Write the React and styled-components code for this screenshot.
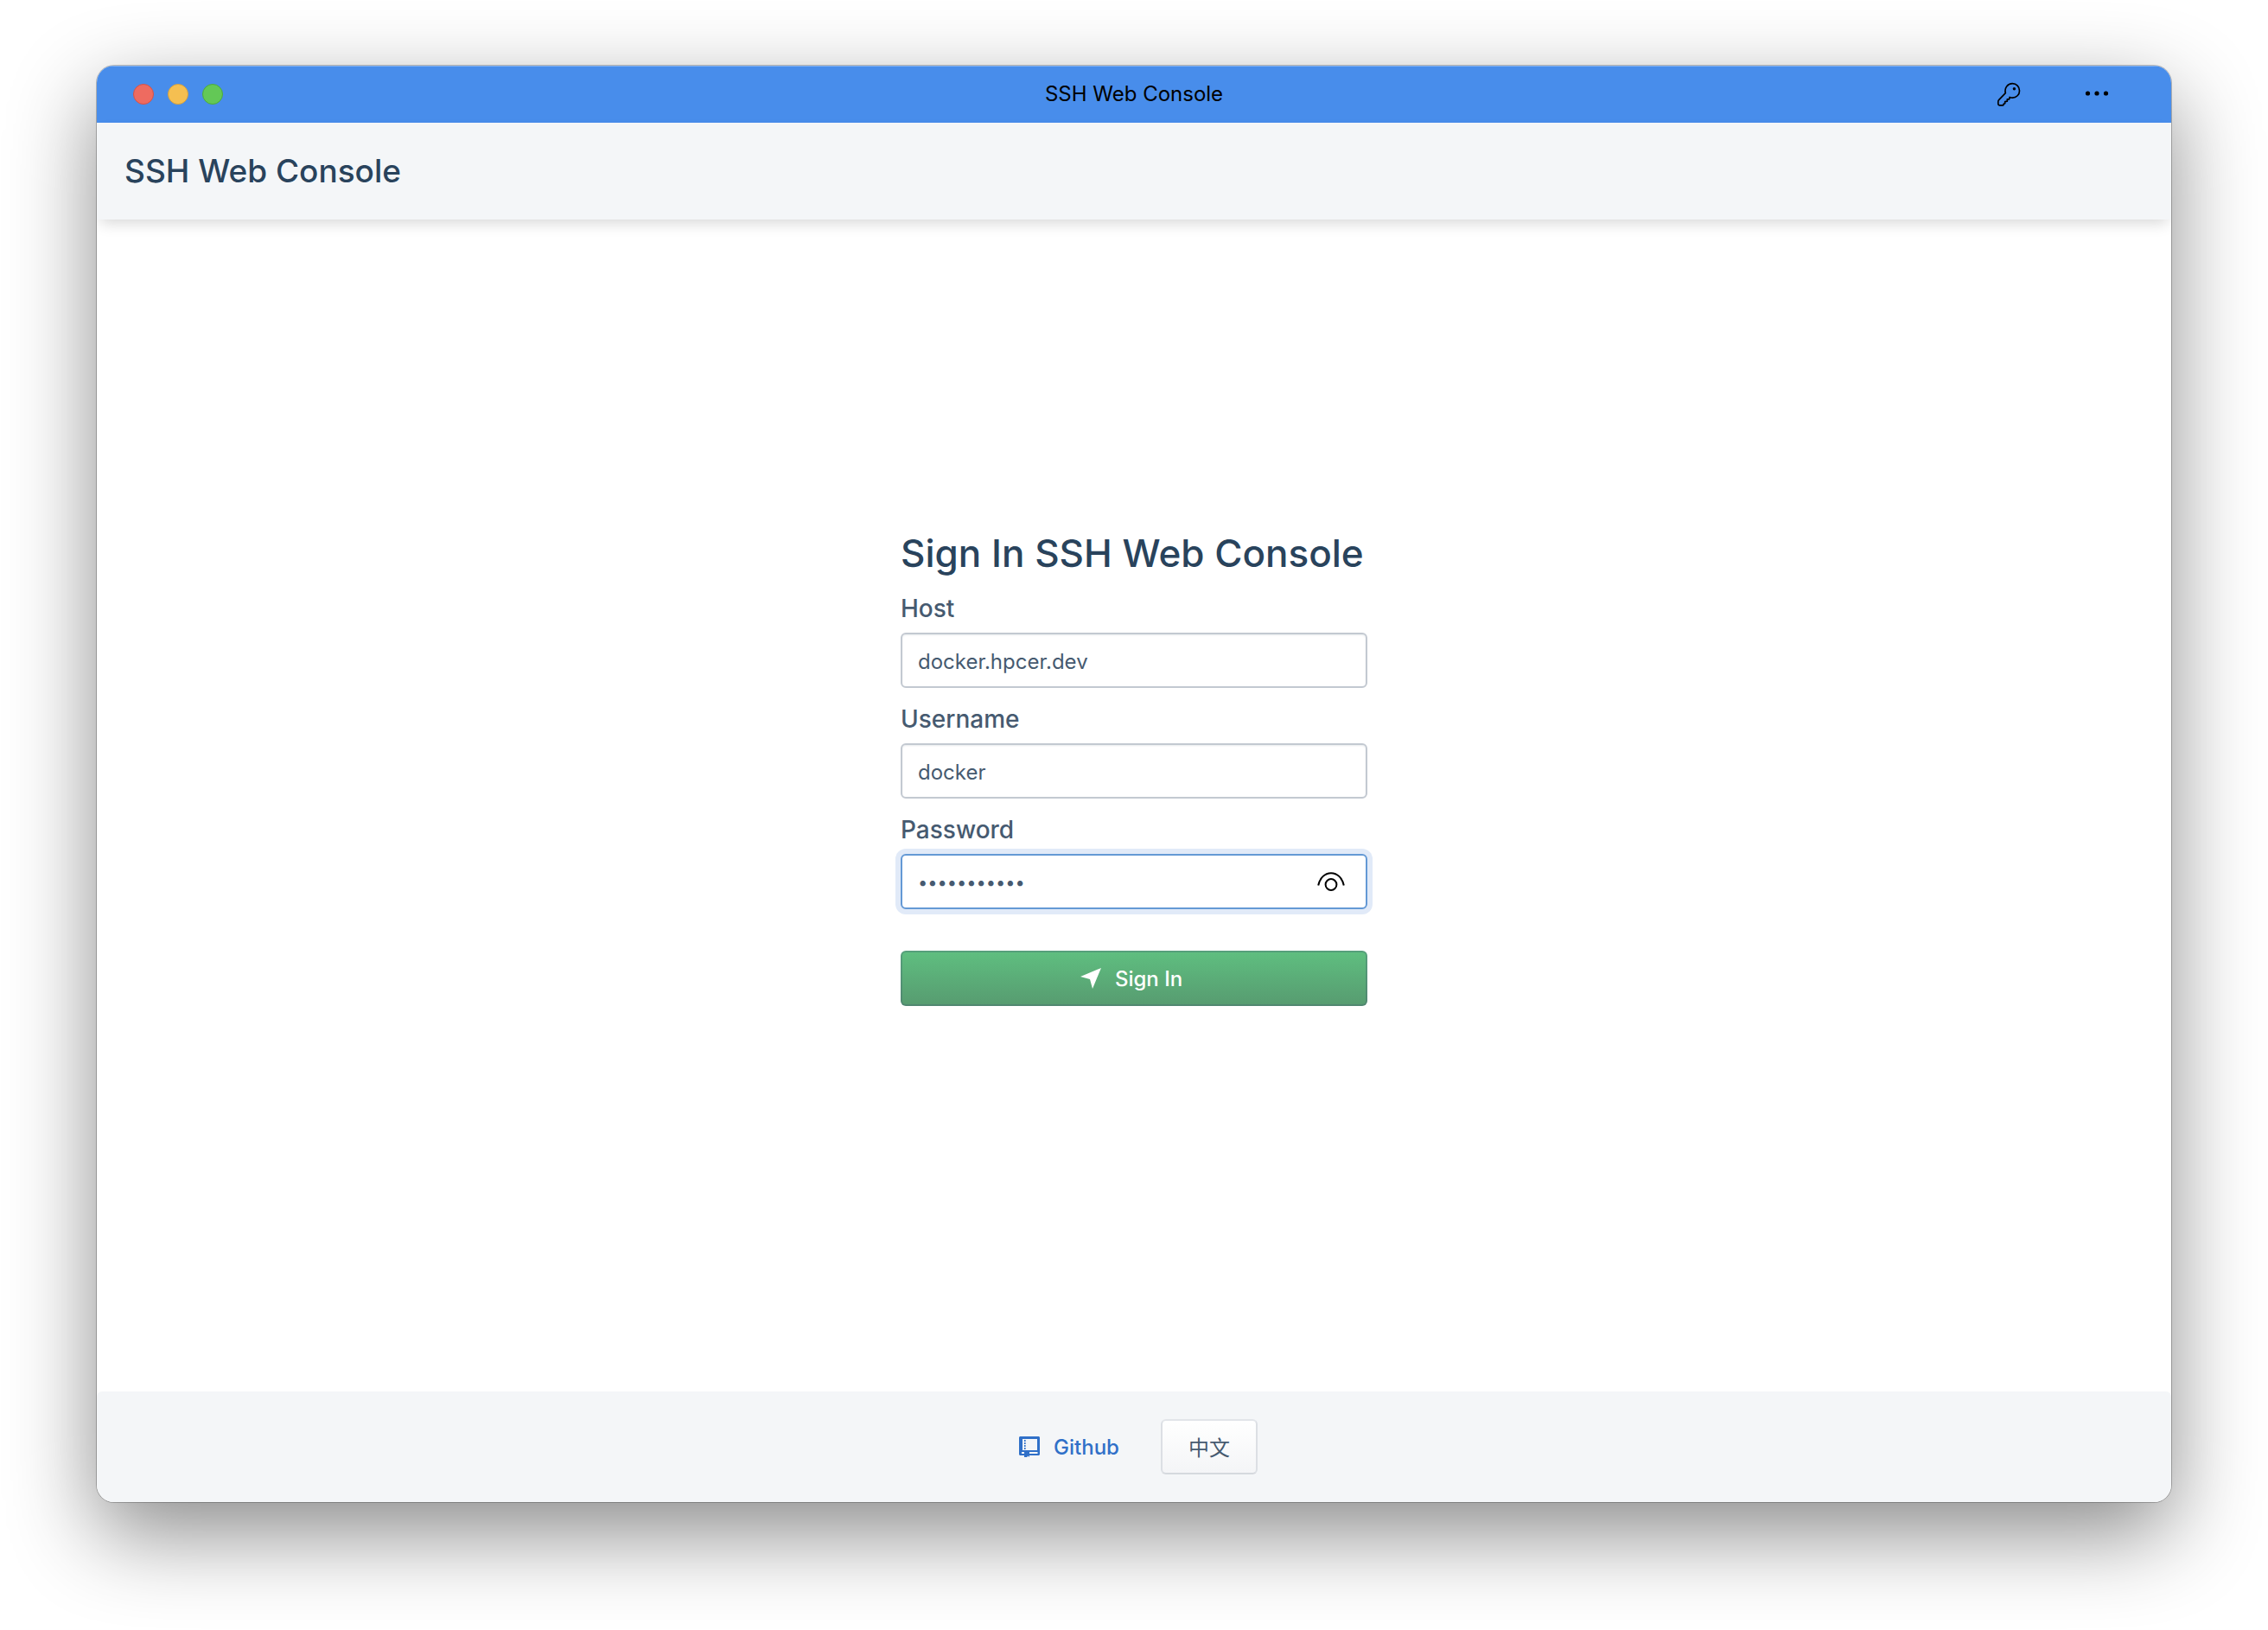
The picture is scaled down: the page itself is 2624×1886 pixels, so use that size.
import React, { useState } from 'react';
import styled, { createGlobalStyle } from 'styled-components';

const GlobalStyle = createGlobalStyle`
  *, *::before, *::after { box-sizing: border-box; }
  body {
    margin: 0;
    background: #ffffff;
    font-family: Inter, "Liberation Sans", "Noto Sans CJK SC", sans-serif;
  }
`;

const Desktop = styled.div`
  display: flex;
  min-height: 100vh;
  padding: 76px 112px 148px;
`;

const Window = styled.div`
  display: flex;
  flex-direction: column;
  flex: 1;
  overflow: hidden;
  border-radius: 20px;
  background: #ffffff;
  box-shadow:
    0 0 0 1px rgba(0, 0, 0, 0.24),
    0 36px 100px rgba(0, 0, 0, 0.46);
`;

const TitleBar = styled.div`
  display: grid;
  grid-template-columns: 1fr auto 1fr;
  align-items: center;
  height: 66px;
  padding: 0 42px;
  background: #488deb;
  box-shadow: inset 0 1px 0 #86b4f2;
`;

const Lights = styled.div`
  display: flex;
  gap: 16px;
`;

const Light = styled.button`
  width: 24px;
  height: 24px;
  padding: 0;
  border: 1px solid ${(p) => p.$edge};
  border-radius: 50%;
  background: ${(p) => p.$fill};
`;

const WindowTitle = styled.div`
  color: #000000;
  font-size: 24px;
  line-height: 32px;
`;

const Tools = styled.div`
  display: flex;
  justify-content: flex-end;
  gap: 74px;
  padding-right: 30px;
`;

const IconButton = styled.button`
  display: flex;
  align-items: center;
  justify-content: center;
  padding: 0;
  border: 0;
  background: none;
  color: #000000;
`;

const Header = styled.header`
  display: flex;
  align-items: center;
  height: 112px;
  padding: 0 32px;
  background: #f4f6f8;
  box-shadow: 0 8px 16px -4px rgba(0, 0, 0, 0.16);
`;

const Brand = styled.h2`
  margin: 0;
  color: #29435c;
  font-size: 37px;
  font-weight: 500;
  line-height: 48px;
`;

const Main = styled.main`
  display: flex;
  flex: 1;
  align-items: center;
  justify-content: center;
  padding-bottom: 88px;
`;

const Form = styled.form`
  display: flex;
  flex-direction: column;
  width: 540px;
`;

const FormTitle = styled.h1`
  margin: 0 0 16px;
  color: #29435c;
  font-size: 44px;
  font-weight: 500;
  line-height: 56px;
  white-space: nowrap;
`;

const Field = styled.div`
  display: flex;
  flex-direction: column;
  gap: 8px;
  margin-bottom: 16px;
`;

const Label = styled.label`
  color: #465a70;
  font-size: 28px;
  font-weight: 500;
  line-height: 40px;
`;

const Control = styled.div`
  display: flex;
  align-items: center;
  height: 64px;
  padding-right: 24px;
  border: 2px solid ${(p) => (p.$active ? '#6499d5' : '#c3c9d1')};
  border-radius: 6px;
  background: #ffffff;
  box-shadow: ${(p) =>
    p.$active ? '0 0 0 6px #e1eaf8' : 'inset 0 1px 2px rgba(67, 90, 111, 0.12)'};
`;

const Input = styled.input`
  flex: 1;
  min-width: 0;
  height: 60px;
  padding: 2px 18px 0;
  border: 0;
  outline: 0;
  background: none;
  color: #465a70;
  font: inherit;
  font-size: 24px;

  &[type='password'] {
    font-size: 20px;
  }
`;

const SubmitButton = styled.button`
  display: flex;
  align-items: center;
  justify-content: center;
  gap: 16px;
  height: 64px;
  margin-top: 32px;
  padding: 0 22px 0 16px;
  border: 2px solid rgba(67, 90, 111, 0.3);
  border-radius: 6px;
  background: linear-gradient(to bottom, #5fbf80, #579b70) border-box;
  color: #ffffff;
  font: inherit;
  font-size: 24px;
  font-weight: 500;
`;

const Footer = styled.footer`
  display: flex;
  align-items: center;
  justify-content: center;
  gap: 16px;
  height: 128px;
  padding-right: 22px;
  border-radius: 6px 6px 0 0;
  background: #f4f6f8;
`;

const FooterLink = styled.a`
  display: flex;
  align-items: center;
  gap: 16px;
  height: 64px;
  padding: 0 32px;
  color: #3070c8;
  font-size: 24px;
  font-weight: 500;
  text-decoration: none;
`;

const LanguageButton = styled.button`
  height: 64px;
  padding: 0 30px 2px;
  border: 2px solid;
  border-color: #e2e5e9 #dcdfe4 #d5d9de;
  border-radius: 6px;
  background: linear-gradient(to bottom, #ffffff, #f4f5f7);
  color: #465a70;
  font: inherit;
  font-size: 24px;
`;

const KeyIcon = () => (
  <svg width="28" height="28" viewBox="0 0 28 28" fill="none" aria-hidden="true">
    <path
      d="M10.300 12.700C8.800 6.600 12.800 1.700 18.300 1.700c4.700 0 8.200 3.600 8.200 8.200 0 4.700-3.600 8.200-8.200 8.200-1.200 0-2.300-.2-3.200-.6l-.5 2.300h-2.300v2.400l-2.600.4v2.100l-1.600.6v.6c0 .5-.4.9-.9.9H3.500c-1 0-1.700-.7-1.700-1.700v-2.500c0-.8.200-1.300.8-1.900z"
      stroke="currentColor"
      strokeWidth="1.700"
      strokeLinejoin="round"
    />
    <circle cx="20.400" cy="7.700" r="1.700" fill="currentColor" />
  </svg>
);

const MoreIcon = () => (
  <svg width="28" height="28" viewBox="0 0 28 28" fill="currentColor" aria-hidden="true">
    <circle cx="3.500" cy="13" r="2.600" />
    <circle cx="14" cy="13" r="2.600" />
    <circle cx="24.500" cy="13" r="2.600" />
  </svg>
);

const EyeIcon = () => (
  <svg width="32" height="24" viewBox="0 0 32 24" fill="none" stroke="currentColor" strokeWidth="2" aria-hidden="true">
    <path d="M1.200 16.500C3 8 8.600 2.200 16 2.200S29 8 30.800 16.500" />
    <circle cx="16" cy="15.500" r="6.400" />
  </svg>
);

const SendIcon = () => (
  <svg width="24" height="24" viewBox="0 0 24 24" fill="currentColor" aria-hidden="true">
    <path d="M24 0 0 10l11 3 3 11z" />
  </svg>
);

const RepoIcon = () => (
  <svg width="24" height="24" viewBox="0 0 24 24" aria-hidden="true">
    <path
      fill="currentColor"
      fillRule="evenodd"
      d="M1.500 0h21C23.300 0 24 .7 24 1.500v19c0 .8-.7 1.500-1.500 1.500H12v2l-1.500-1.500L9 24H6v-2H1.500C.7 22 0 21.300 0 20.500v-19C0 .7.7 0 1.500 0zM4 3v13h17V3zM3 18v2h3v-2zm9 0v2h9.500v-2z"
    />
    <path d="M6.800 4v12" stroke="currentColor" strokeWidth="1.600" strokeDasharray="2 1" />
  </svg>
);

export default function App() {
  const [host, setHost] = useState('docker.hpcer.dev');
  const [username, setUsername] = useState('docker');
  const [password, setPassword] = useState('dockerhpcer');
  const [visible, setVisible] = useState(false);

  return (
    <>
      <GlobalStyle />
      <Desktop>
        <Window>
          <TitleBar>
            <Lights>
              <Light type="button" aria-label="Close" $fill="#ee6b60" $edge="#d3524a" />
              <Light type="button" aria-label="Minimize" $fill="#f5bf51" $edge="#d6a13d" />
              <Light type="button" aria-label="Zoom" $fill="#63c856" $edge="#4caa3e" />
            </Lights>
            <WindowTitle>SSH Web Console</WindowTitle>
            <Tools>
              <IconButton type="button" aria-label="Passwords"><KeyIcon /></IconButton>
              <IconButton type="button" aria-label="More"><MoreIcon /></IconButton>
            </Tools>
          </TitleBar>
          <Header>
            <Brand>SSH Web Console</Brand>
          </Header>
          <Main>
            <Form onSubmit={(e) => e.preventDefault()}>
              <FormTitle>Sign In SSH Web Console</FormTitle>
              <Field>
                <Label htmlFor="host">Host</Label>
                <Control>
                  <Input id="host" value={host} onChange={(e) => setHost(e.target.value)} />
                </Control>
              </Field>
              <Field>
                <Label htmlFor="username">Username</Label>
                <Control>
                  <Input id="username" value={username} onChange={(e) => setUsername(e.target.value)} />
                </Control>
              </Field>
              <Field>
                <Label htmlFor="password">Password</Label>
                <Control $active>
                  <Input
                    id="password"
                    type={visible ? 'text' : 'password'}
                    value={password}
                    onChange={(e) => setPassword(e.target.value)}
                  />
                  <IconButton type="button" aria-label="Show password" onClick={() => setVisible(!visible)}>
                    <EyeIcon />
                  </IconButton>
                </Control>
              </Field>
              <SubmitButton type="submit">
                <SendIcon />
                Sign In
              </SubmitButton>
            </Form>
          </Main>
          <Footer>
            <FooterLink href="#github">
              <RepoIcon />
              Github
            </FooterLink>
            <LanguageButton type="button" lang="zh">中文</LanguageButton>
          </Footer>
        </Window>
      </Desktop>
    </>
  );
}
